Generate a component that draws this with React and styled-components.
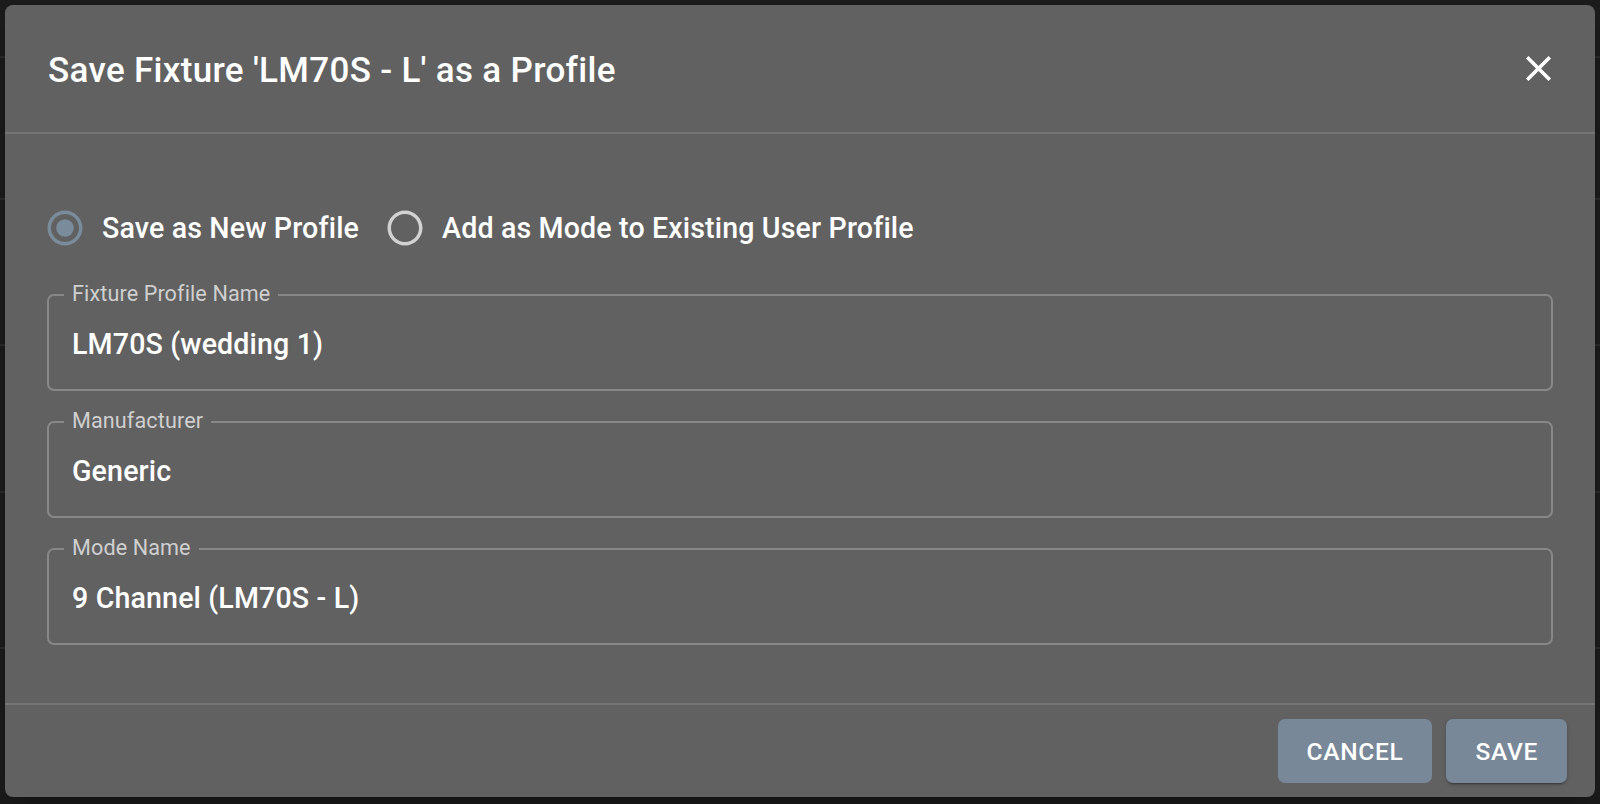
import React from "react";
import styled, { createGlobalStyle } from "styled-components";

const GlobalStyle = createGlobalStyle`
  html, body {
    margin: 0;
    padding: 0;
    background: #1c1c1c;
    font-family: "Roboto", "Liberation Sans", sans-serif;
  }
  * {
    box-sizing: border-box;
  }
`;

const Page = styled.div`
  position: relative;
  width: 100%;
  height: 804px;
  overflow: hidden;
  background: #1c1c1c;
`;

const BackRows = styled.div`
  display: flex;
  flex-direction: column;
  height: 100%;
`;

const BackRow = styled.div`
  height: ${(p) => p.h}px;
  flex-shrink: 0;
  border-bottom: 2px solid #2a2a2a;
`;

const Dialog = styled.div`
  position: absolute;
  top: 5px;
  left: 5px;
  width: 1590px;
  height: 792px;
  background: #616161;
  border-radius: 8px;
  display: flex;
  flex-direction: column;
  box-shadow: 0 11px 15px -7px rgba(0, 0, 0, 0.2),
    0 24px 38px 3px rgba(0, 0, 0, 0.14);
  color: #fff;
`;

const Header = styled.div`
  height: 129px;
  flex-shrink: 0;
  display: flex;
  align-items: center;
  justify-content: space-between;
  padding: 4px 35px 0 43px;
  border-bottom: 2px solid #747474;
`;

const Title = styled.h2`
  margin: 0;
  font-size: 35px;
  font-weight: 500;
  letter-spacing: 0.009em;
  color: #fff;
`;

const CloseButton = styled.button`
  border: none;
  background: transparent;
  padding: 0;
  margin-top: -4px;
  display: flex;
  cursor: pointer;
  color: #fff;
`;

const Content = styled.div`
  flex: 1;
  padding: 57px 42px 0 42px;
  display: flex;
  flex-direction: column;
`;

const RadioRow = styled.div`
  display: flex;
  align-items: center;
  height: 74px;
`;

const Option = styled.label`
  display: flex;
  align-items: center;
  margin-left: -19px;
  margin-right: 28px;
  cursor: pointer;
`;

const RadioBox = styled.span`
  display: flex;
  padding: 16px;
  color: ${(p) => (p.checked ? "#7a8b9c" : "#d2d2d2")};
`;

const OptionText = styled.span`
  font-size: 28.6px;
  font-weight: 500;
  color: #fff;
  letter-spacing: 0.005em;
`;

const Fields = styled.div`
  display: flex;
  flex-direction: column;
  gap: 30px;
  margin-top: 29px;
`;

const Field = styled.div`
  position: relative;
  height: 97px;
  border: 2px solid #888888;
  border-radius: 7px;
  display: flex;
  align-items: center;
  padding: 3px 22px 0 23px;
`;

const FieldLabel = styled.span`
  position: absolute;
  top: -13px;
  left: 15px;
  padding: 0 8px;
  background: #616161;
  font-size: 21.6px;
  line-height: 22px;
  color: #cfcfcf;
  letter-spacing: 0.005em;
`;

const FieldValue = styled.span`
  font-size: 28.6px;
  font-weight: 500;
  color: #fff;
  letter-spacing: 0.005em;
`;

const Footer = styled.div`
  flex-shrink: 0;
  display: flex;
  justify-content: flex-end;
  gap: 14px;
  padding: 14px 28px 14px 0;
  border-top: 2px solid #747474;
`;

const Button = styled.button`
  height: 64px;
  min-width: 112px;
  padding: 0 29px;
  border: none;
  border-radius: 7px;
  background: #788899;
  color: #fff;
  font-family: "Roboto", "Liberation Sans", sans-serif;
  font-size: 24.5px;
  font-weight: 500;
  letter-spacing: 0.02857em;
  text-transform: uppercase;
  cursor: pointer;
  box-shadow: ${(p) =>
    p.raised
      ? "0 3px 1px -2px rgba(0,0,0,0.2), 0 2px 2px 0 rgba(0,0,0,0.14), 0 1px 5px 0 rgba(0,0,0,0.12)"
      : "none"};
`;

function RadioIcon({ checked }) {
  return (
    <svg width="42" height="42" viewBox="0 0 24 24" fill="currentColor">
      <path d="M12 2C6.48 2 2 6.48 2 12s4.48 10 10 10 10-4.48 10-10S17.52 2 12 2zm0 18c-4.42 0-8-3.58-8-8s3.58-8 8-8 8 3.58 8 8-3.58 8-8 8z" />
      {checked && <circle cx="12" cy="12" r="5" />}
    </svg>
  );
}

function CloseIcon() {
  return (
    <svg width="43" height="43" viewBox="0 0 24 24" fill="currentColor">
      <path d="M19 6.41 17.59 5 12 10.59 6.41 5 5 6.41 10.59 12 5 17.59 6.41 19 12 13.41 17.59 19 19 17.59 13.41 12z" />
    </svg>
  );
}

const fields = [
  { label: "Fixture Profile Name", value: "LM70S (wedding 1)" },
  { label: "Manufacturer", value: "Generic" },
  { label: "Mode Name", value: "9 Channel (LM70S - L)" },
];

export default function App() {
  return (
    <>
      <GlobalStyle />
      <Page>
        <BackRows>
          <BackRow h={58} />
          <BackRow h={142} />
          <BackRow h={146} />
          <BackRow h={147} />
          <BackRow h={156} />
        </BackRows>
        <Dialog>
          <Header>
            <Title>Save Fixture 'LM70S - L' as a Profile</Title>
            <CloseButton aria-label="close">
              <CloseIcon />
            </CloseButton>
          </Header>
          <Content>
            <RadioRow>
              <Option>
                <RadioBox checked>
                  <RadioIcon checked />
                </RadioBox>
                <OptionText>Save as New Profile</OptionText>
              </Option>
              <Option>
                <RadioBox>
                  <RadioIcon />
                </RadioBox>
                <OptionText>Add as Mode to Existing User Profile</OptionText>
              </Option>
            </RadioRow>
            <Fields>
              {fields.map((f) => (
                <Field key={f.label}>
                  <FieldLabel>{f.label}</FieldLabel>
                  <FieldValue>{f.value}</FieldValue>
                </Field>
              ))}
            </Fields>
          </Content>
          <Footer>
            <Button>Cancel</Button>
            <Button raised>Save</Button>
          </Footer>
        </Dialog>
      </Page>
    </>
  );
}
